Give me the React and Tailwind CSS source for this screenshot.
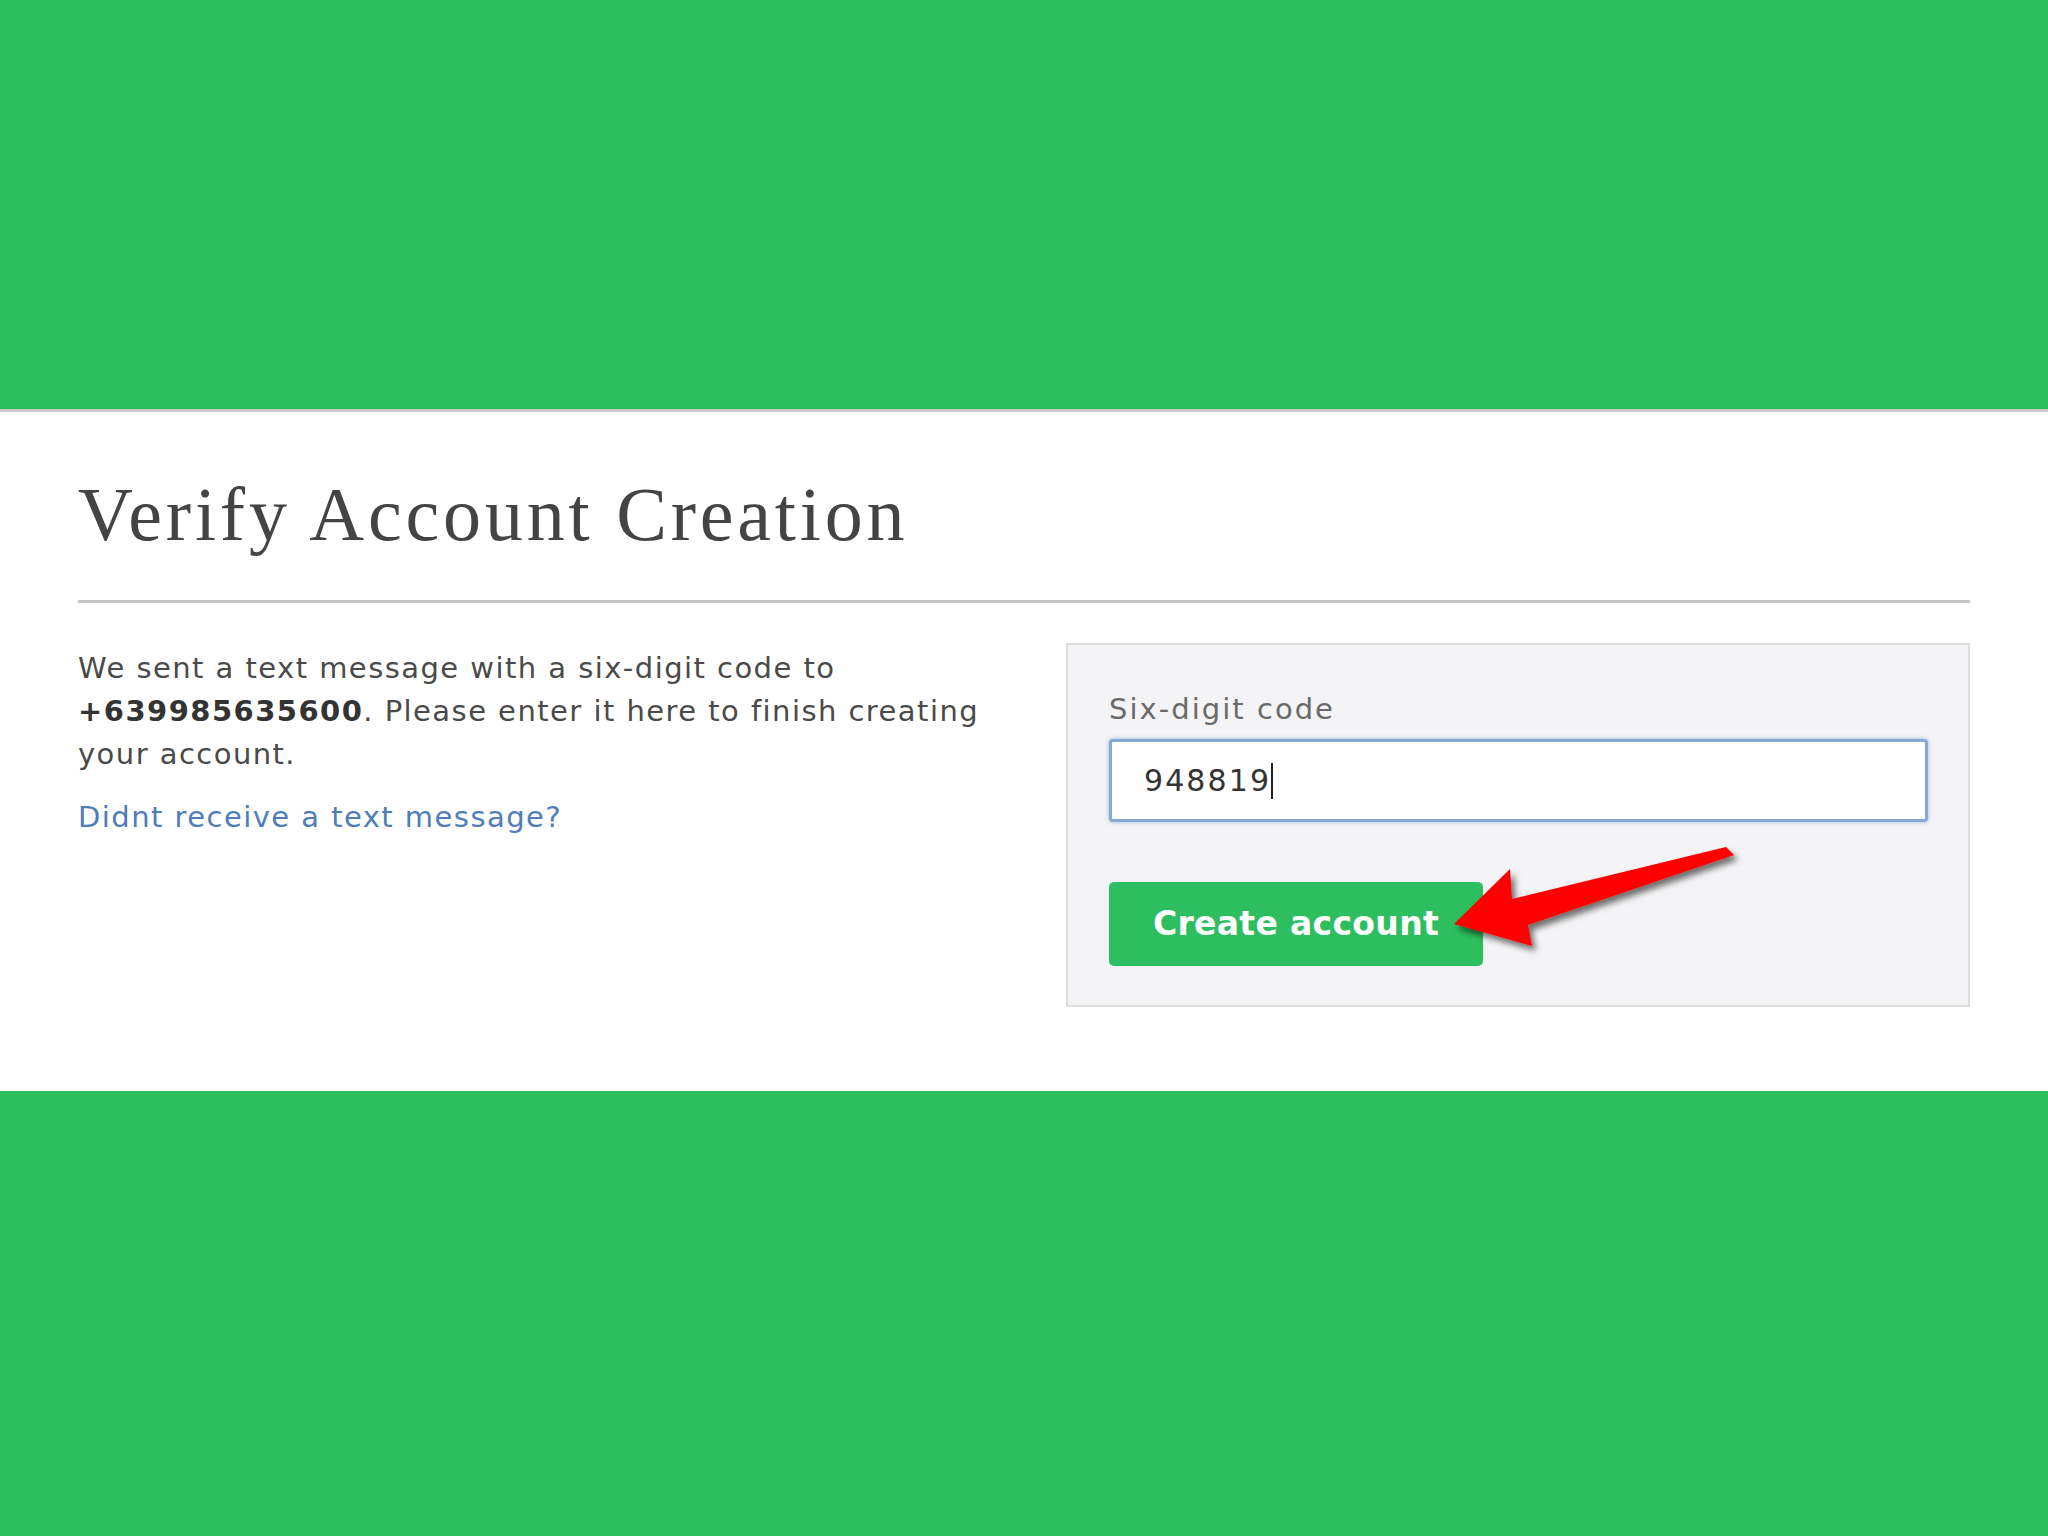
import React from "react";

function Arrow() {
  return (
    <svg
      className="absolute left-[386px] top-[198px] pointer-events-none"
      width="300"
      height="120"
      viewBox="0 0 300 120"
    >
      <defs>
        <filter id="sh" x="-20%" y="-40%" width="140%" height="180%">
          <feDropShadow dx="4" dy="5" stdDeviation="3" floodColor="#000" floodOpacity="0.55" />
        </filter>
      </defs>
      <polygon
        points="0,81 56,26 58,56 272,4 280,12 74,82 78,103"
        fill="#ff0000"
        filter="url(#sh)"
      />
    </svg>
  );
}

const sans = { fontFamily: '"DejaVu Sans", "Open Sans", sans-serif' };

export default function App() {
  return (
    <div className="w-[2048px] h-[1536px] flex flex-col bg-[#2dbe60]">
      <div className="h-[409px] shrink-0 bg-[#2dbe60]" />
      <div className="h-[682px] shrink-0 bg-white border-t-[3px] border-[#c9c9c9] px-[78px] pt-[52px]">
        <h1
          className="text-[76px] leading-[100px] text-[#444] tracking-[0.05em]"
          style={{ fontFamily: '"Liberation Serif", "DejaVu Serif", serif', fontWeight: 400 }}
        >
          Verify Account Creation
        </h1>
        <div className="mt-[36px] h-[3px] bg-[#c4c4c4]" />
        <div className="mt-[40px] flex justify-between" style={sans}>
          <div className="w-[940px] pt-[4px]">
            <p className="text-[29px] leading-[43px] tracking-[0.05em] text-[#4a4a4a]">
              We sent a text message with a six-digit code to{" "}
              <span className="font-bold text-[#333]">+639985635600</span>. Please enter it here to finish
              creating your account.
            </p>
            <a className="block mt-[20px] text-[29px] leading-[43px] tracking-[0.05em] text-[#4f7dba]">
              Didnt receive a text message?
            </a>
          </div>
          <div className="relative w-[904px] h-[364px] bg-[#f4f4f6] border-2 border-[#dcdcdc] px-[41px] pt-[42px]">
            <label className="block text-[29px] leading-[44px] tracking-[0.07em] text-[#6a6a6a]">
              Six-digit code
            </label>
            <div className="mt-[8px] h-[83px] w-[819px] rounded-[4px] border-[3px] border-[#86a8d6] bg-white flex items-center px-[32px] shadow-[0_0_4px_rgba(100,140,200,0.6)]">
              <span className="text-[30px] tracking-[0.07em] text-[#333]">948819</span>
              <span className="w-[2px] h-[36px] bg-[#222]" />
            </div>
            <button className="mt-[60px] h-[84px] w-[374px] rounded-[5px] bg-[#2dbe60] text-white font-bold text-[33px] tracking-[0.01em] flex items-center justify-center">
              Create account
            </button>
            <Arrow />
          </div>
        </div>
      </div>
      <div className="flex-1 bg-[#2dbe60]" />
    </div>
  );
}
